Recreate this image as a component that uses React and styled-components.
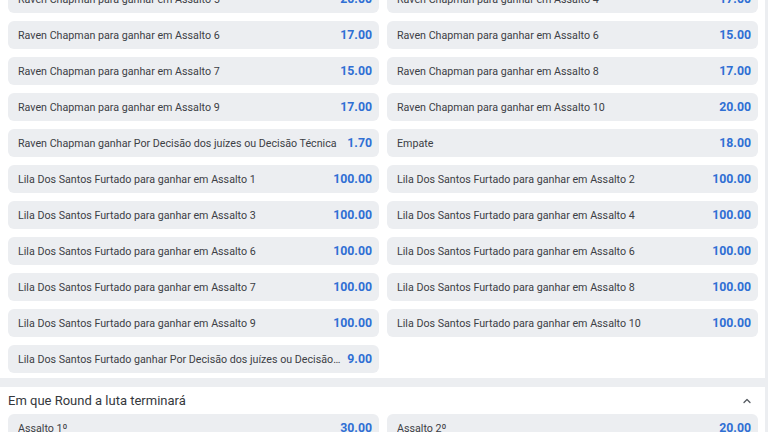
import React from 'react';
import styled, { createGlobalStyle } from 'styled-components';

const GlobalStyle = createGlobalStyle`
  html, body {
    margin: 0;
    padding: 0;
    background: #eceef1;
    font-family: Roboto, "Noto Sans", "Liberation Sans", sans-serif;
  }
  body {
    height: 432px;
    overflow: hidden;
  }
`;

const Page = styled.div`
  height: 432px;
  overflow: hidden;
  margin-right: 3px;
`;

const Scroller = styled.div`
  margin-top: -15px;
  display: flex;
  flex-direction: column;
  gap: 9px;
`;

const Section = styled.section`
  background: #ffffff;
  padding: 0 7px 5px 8px;
`;

const SectionHeader = styled.div`
  height: 27px;
  display: flex;
  align-items: center;
  justify-content: space-between;
  font-size: 13px;
  color: #35383c;
  padding-right: 5px;
`;

const Chevron = styled.svg`
  width: 12px;
  height: 12px;
  color: #555a60;
`;

const Grid = styled.div`
  display: grid;
  grid-template-columns: 1fr 1fr;
  gap: 8px;
`;

const Card = styled.div`
  height: 28px;
  border-radius: 6px;
  background: #eceef1;
  display: flex;
  align-items: center;
  gap: 6px;
  padding: 0 7px 0 10px;
  min-width: 0;
`;

const Label = styled.span`
  flex: 1;
  min-width: 0;
  font-size: 10.7px;
  color: #3c4045;
  white-space: nowrap;
  overflow: hidden;
  text-overflow: ellipsis;
`;

const Odds = styled.span`
  font-size: 12.3px;
  font-weight: 700;
  color: #2f6fd4;
`;

const RC = 'Raven Chapman para ganhar em Assalto ';
const LS = 'Lila Dos Santos Furtado para ganhar em Assalto ';

const winnerMarkets = [
  [RC + '5', '20.00'], [RC + '4', '17.00'],
  [RC + '6', '17.00'], [RC + '6', '15.00'],
  [RC + '7', '15.00'], [RC + '8', '17.00'],
  [RC + '9', '17.00'], [RC + '10', '20.00'],
  ['Raven Chapman ganhar Por Decisão dos juízes ou Decisão Técnica', '1.70'], ['Empate', '18.00'],
  [LS + '1', '100.00'], [LS + '2', '100.00'],
  [LS + '3', '100.00'], [LS + '4', '100.00'],
  [LS + '6', '100.00'], [LS + '6', '100.00'],
  [LS + '7', '100.00'], [LS + '8', '100.00'],
  [LS + '9', '100.00'], [LS + '10', '100.00'],
  ['Lila Dos Santos Furtado ganhar Por Decisão dos juízes ou Decisão Técnica', '9.00'],
];

const roundMarkets = [
  ['Assalto 1º', '30.00'],
  ['Assalto 2º', '20.00'],
];

const OddCard = ({ label, odds }) => (
  <Card>
    <Label>{label}</Label>
    <Odds>{odds}</Odds>
  </Card>
);

export default function App() {
  return (
    <Page>
      <GlobalStyle />
      <Scroller>
        <Section>
          <Grid>
            {winnerMarkets.map(([label, odds], i) => (
              <OddCard key={i} label={label} odds={odds} />
            ))}
          </Grid>
        </Section>
        <Section>
          <SectionHeader>
            <span>Em que Round a luta terminará</span>
            <Chevron viewBox="0 0 24 24" fill="none" stroke="currentColor" strokeWidth="2.6" strokeLinecap="round" strokeLinejoin="round">
              <path d="M6 15l6-6 6 6" />
            </Chevron>
          </SectionHeader>
          <Grid>
            {roundMarkets.map(([label, odds], i) => (
              <OddCard key={i} label={label} odds={odds} />
            ))}
          </Grid>
        </Section>
      </Scroller>
    </Page>
  );
}
